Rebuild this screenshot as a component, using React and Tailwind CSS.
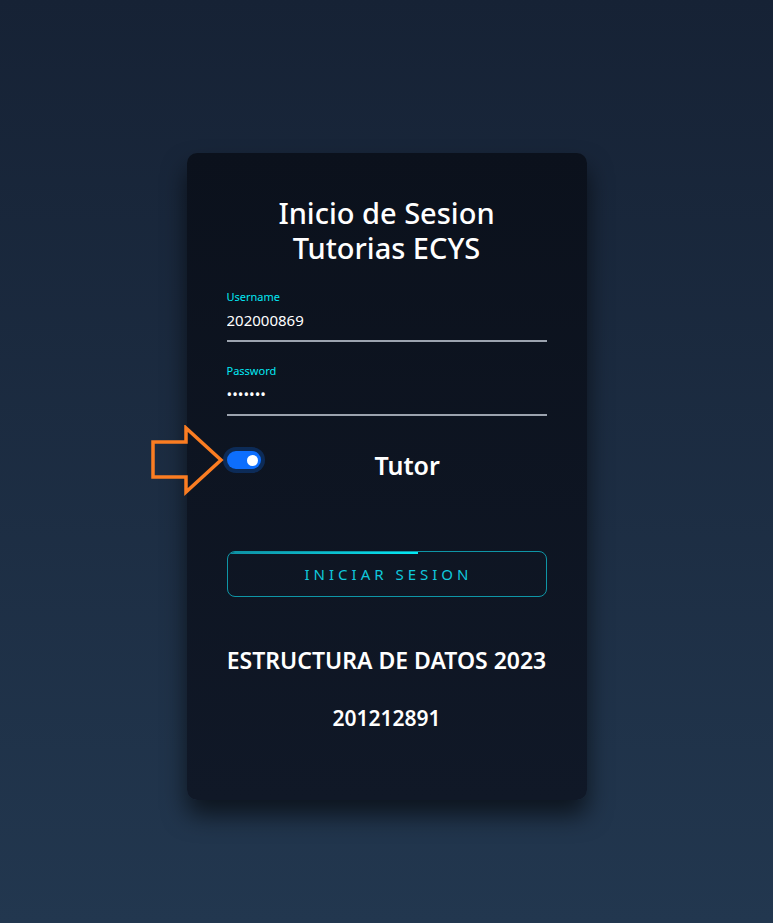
import React, { useState } from "react";

const font = { fontFamily: '"Noto Sans", "Open Sans", sans-serif' };

function Field({ label, value, type = "text" }) {
  return (
    <div className="relative">
      <label className="block text-[11px] leading-[14px] text-[#03e9f4]">{label}</label>
      <input
        type={type}
        defaultValue={value}
        className="mt-[6px] block w-full bg-transparent text-[15px] leading-[20px] text-white outline-none pb-[10px] border-b-2 border-[#9ca3af]"
        style={font}
      />
    </div>
  );
}

function Arrow() {
  return (
    <svg width="78" height="72" viewBox="0 0 78 72" className="absolute left-[-77px] top-[-23px]">
      <polygon
        points="3,17 36,17 36,3 71,35 36,67 36,52 3,52"
        fill="none"
        stroke="#fb7d22"
        strokeWidth="3.5"
        strokeLinejoin="miter"
      />
    </svg>
  );
}

export default function App() {
  const [tutor, setTutor] = useState(true);

  return (
    <div
      className="w-full min-h-[923px] bg-gradient-to-b from-[#162235] to-[#22374f] flex justify-center pt-[153px]"
      style={font}
    >
      <div className="w-[400px] h-[647px] rounded-[10px] bg-gradient-to-b from-[#0b111c] to-[#101827] shadow-[0_15px_25px_rgba(0,0,0,0.6)] px-[40px] pt-[42px]">
        <h2 className="text-center text-white text-[29px] leading-[35px] font-medium">
          Inicio de Sesion
          <br />
          Tutorias ECYS
        </h2>

        <div className="mt-[25px] flex flex-col gap-[22px]">
          <Field label="Username" value="202000869" />
          <Field label="Password" value="1234567" type="password" />
        </div>

        <div className="relative mt-[32px] flex items-start">
          <Arrow />
          <button
            onClick={() => setTutor(!tutor)}
            className={`mt-[3px] w-[34px] h-[18px] rounded-full flex items-center px-[3px] ring-4 ring-[#0d6efd]/25 ${
              tutor ? "bg-[#0d6efd] justify-end" : "bg-[#374151] justify-start"
            }`}
          >
            <span className="w-[11px] h-[11px] rounded-full bg-white" />
          </button>
          <span className="ml-[114px] text-white text-[25px] leading-[34px] font-semibold">Tutor</span>
        </div>

        <button className="relative mt-[69px] w-full h-[46px] rounded-[8px] border border-[#0fb5c7]/80 overflow-hidden">
          <span className="absolute top-0 left-0 h-[2px] w-[190px] bg-gradient-to-r from-[#0e8fa3] to-[#03e9f4]" />
          <span className="text-[15px] tracking-[4px] text-[#10c8dc] pl-[4px]">INICIAR SESION</span>
        </button>

        <p className="mt-[48px] text-center text-white text-[23px] leading-[31px] font-semibold">ESTRUCTURA DE DATOS 2023</p>
        <p className="mt-[28px] text-center text-white text-[21px] leading-[29px] font-semibold">201212891</p>
      </div>
    </div>
  );
}
